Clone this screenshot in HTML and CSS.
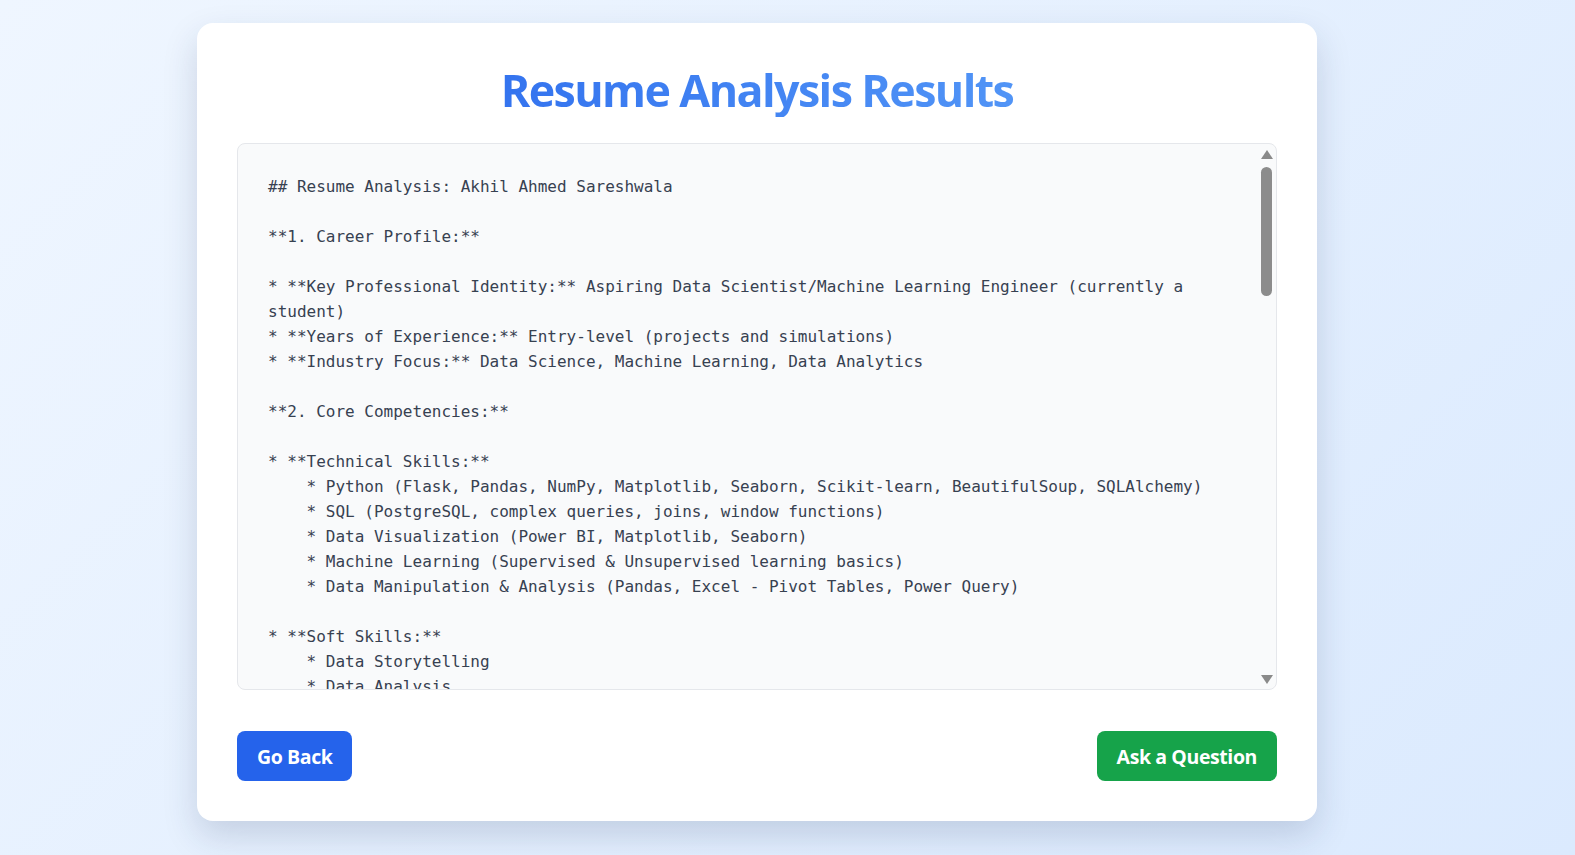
FILE: index.html
```html
<!DOCTYPE html>
<html lang="en">
<head>
<meta charset="utf-8">
<title>Resume Analysis Results</title>
<link rel="stylesheet" href="styles.css">
</head>
<body>
<main class="card">
  <h1 class="title">Resume Analysis Results</h1>
  <div class="analysis-wrap">
  <pre class="analysis">## Resume Analysis: Akhil Ahmed Sareshwala

**1. Career Profile:**

* **Key Professional Identity:** Aspiring Data Scientist/Machine Learning Engineer (currently a student)
* **Years of Experience:** Entry-level (projects and simulations)
* **Industry Focus:** Data Science, Machine Learning, Data Analytics

**2. Core Competencies:**

* **Technical Skills:**
    * Python (Flask, Pandas, NumPy, Matplotlib, Seaborn, Scikit-learn, BeautifulSoup, SQLAlchemy)
    * SQL (PostgreSQL, complex queries, joins, window functions)
    * Data Visualization (Power BI, Matplotlib, Seaborn)
    * Machine Learning (Supervised &amp; Unsupervised learning basics)
    * Data Manipulation &amp; Analysis (Pandas, Excel - Pivot Tables, Power Query)

* **Soft Skills:**
    * Data Storytelling
    * Data Analysis</pre>
    <div class="scrollbar" aria-hidden="true">
      <span class="sb-arrow sb-up"></span>
      <span class="sb-thumb"></span>
      <span class="sb-arrow sb-down"></span>
    </div>
  </div>
  <div class="actions">
    <a class="btn btn-back" href="#">Go Back</a>
    <a class="btn btn-ask" href="#">Ask a Question</a>
  </div>
</main>
</body>
</html>
```

FILE: styles.css
```css
html, body {
  margin: 0;
  height: 100%;
}

body {
  background: linear-gradient(135deg, #eff6ff 0%, #dbeafe 100%);
  font-family: "Open Sans", "Noto Sans", sans-serif;
  padding: 23px 61px 0 0;
  box-sizing: border-box;
  overflow: hidden;
}

.card {
  max-width: 1120px;
  margin: 0 auto;
  box-sizing: border-box;
  background: #ffffff;
  border-radius: 16px;
  padding: 40px;
  box-shadow: 0 15px 34px rgba(30, 50, 90, 0.17);
}

.title {
  margin: 0 0 26px;
  text-align: center;
  font-size: 44.8px;
  line-height: 1.2;
  font-weight: 700;
  letter-spacing: -1.6px;
  background: linear-gradient(90deg, #2563eb, #60a5fa);
  -webkit-background-clip: text;
  background-clip: text;
  color: transparent;
}

.analysis-wrap {
  position: relative;
}

.analysis {
  margin: 0;
  height: 547px;
  box-sizing: border-box;
  overflow: hidden;
  padding: 30px 45px 30px 30px;
  background: #f9fafb;
  border: 1px solid #e5e7eb;
  border-radius: 8px;
  font-family: "DejaVu Sans Mono", monospace;
  font-size: 16px;
  line-height: 25px;
  color: #374151;
  white-space: pre-wrap;
}

.scrollbar {
  position: absolute;
  top: 7px;
  bottom: 6px;
  right: 4px;
  width: 13px;
  display: flex;
  flex-direction: column;
  align-items: center;
}

.sb-arrow {
  width: 0;
  height: 0;
  border-left: 6.5px solid transparent;
  border-right: 6.5px solid transparent;
}

.sb-up {
  border-bottom: 9px solid #8a8a8a;
}

.sb-down {
  margin-top: auto;
  border-top: 9px solid #8a8a8a;
}

.sb-thumb {
  width: 11px;
  height: 129px;
  margin-top: 8px;
  border-radius: 6px;
  background: #8c8c8c;
}

.actions {
  display: flex;
  justify-content: space-between;
  margin-top: 41px;
}

.btn {
  display: inline-block;
  height: 50px;
  box-sizing: border-box;
  padding: 1px 20px 0;
  border-radius: 8px;
  color: #ffffff;
  font-size: 19.5px;
  font-weight: 700;
  letter-spacing: -0.4px;
  line-height: 50px;
  text-decoration: none;
}

.btn-back {
  background: #2563eb;
}

.btn-ask {
  background: #16a34a;
}
```
